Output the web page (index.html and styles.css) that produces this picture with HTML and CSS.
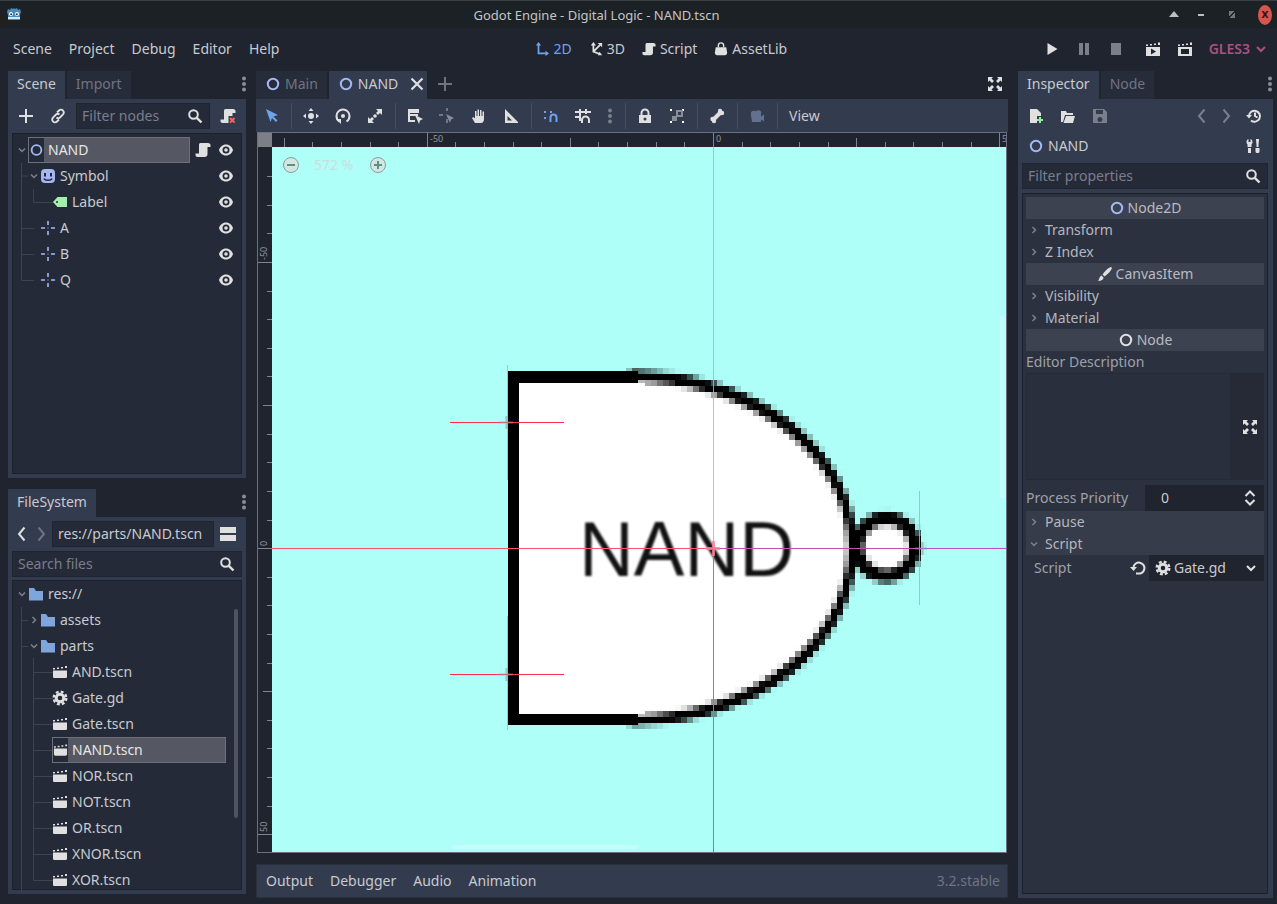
FILE: index.html

```html
<!DOCTYPE html>
<html lang="en">
<head>
<meta charset="UTF-8">
<title>Godot Engine - Digital Logic - NAND.tscn</title>
<link rel="stylesheet" href="styles.css">
</head>
<body>

<!-- icon sheet -->
<svg class="sheet" width="0" height="0">
  <symbol id="logo" viewBox="0 0 16 16"><path fill="#478cbf" d="M1 6l1-3 2 1 1-2 2 1 1-1 1 1 2-1 1 2 2-1 1 3-1 3v5H2V9z"/><circle cx="5" cy="8" r="2" fill="#fff"/><circle cx="11" cy="8" r="2" fill="#fff"/><circle cx="5.2" cy="8.2" r="1" fill="#333"/><circle cx="10.8" cy="8.2" r="1" fill="#333"/><path fill="#fff" d="M2 11h12v2H2z" opacity=".8"/></symbol>
  <symbol id="node" viewBox="0 0 16 16"><circle cx="8" cy="8" r="5.2" fill="none" stroke="currentColor" stroke-width="2"/></symbol>
  <symbol id="pos" viewBox="0 0 16 16"><path fill="none" stroke="#a5b7f3" stroke-width="1.6" d="M1 8h4M11 8h4M8 1v4M8 11v4"/><path fill="#a5b7f3" d="M7.5 7.5h1v1h-1z"/></symbol>
  <symbol id="sprite" viewBox="0 0 16 16"><rect x="1" y="1" width="14" height="14" rx="4" fill="#a5b7f3"/><rect x="4" y="5" width="2" height="3.5" fill="#252a39"/><rect x="10" y="5" width="2" height="3.5" fill="#252a39"/><path d="M4 10.5c1 2.3 7 2.3 8 0" fill="none" stroke="#252a39" stroke-width="1.5"/></symbol>
  <symbol id="label" viewBox="0 0 16 16"><path fill="#a5efac" d="M5.5 3H15v10H5.500L1 8z"/><circle cx="5" cy="8" r="1" fill="#252a39"/></symbol>
  <symbol id="eye" viewBox="0 0 16 16"><path fill="currentColor" fill-rule="evenodd" d="M8 2.5C4.500 2.500 1.800 5 1 8c.8 3 3.500 5.500 7 5.500s6.200-2.500 7-5.500c-.8-3-3.500-5.500-7-5.500zM8 4.500a3.500 3.500 0 1 1 0 7 3.500 3.500 0 0 1 0-7z"/><circle cx="8" cy="8" r="1.800" fill="currentColor"/></symbol>
  <symbol id="script" viewBox="0 0 16 16"><path fill="currentColor" d="M5.500 1H13c1.200 0 2.500.8 2.500 2v2H12.500v7c0 2-1 3-3 3H2.500C1.300 15 .5 14 .5 13v-1.500h3.500V3c0-1.200.5-2 1.500-2z"/></symbol>
  <symbol id="folder" viewBox="0 0 16 16"><path fill="#7ea6dc" d="M1 2h5l2 3h7v9.500H1z"/></symbol>
  <symbol id="clap" viewBox="0 0 16 16"><path fill="currentColor" d="M1 6.500h14v6c0 1-.7 1.500-1.500 1.500h-11C1.700 14 1 13.500 1 12.500z"/><path fill="currentColor" d="M1 4h2v1.500H1zM5 3.500h2V5H5zM9 3h2v1.500H9zM13 2h2v2h-2z"/></symbol>
  <symbol id="gear" viewBox="0 0 16 16"><circle cx="8" cy="8" r="3.800" fill="none" stroke="currentColor" stroke-width="3"/><circle cx="8" cy="8" r="6.300" fill="none" stroke="currentColor" stroke-width="2.400" stroke-dasharray="2.800 2.150"/></symbol>
  <symbol id="search" viewBox="0 0 16 16"><circle cx="6.500" cy="6.500" r="4.300" fill="none" stroke="currentColor" stroke-width="2"/><path d="M9.800 9.800L14.500 14.500" stroke="currentColor" stroke-width="2.400"/></symbol>
  <symbol id="down" viewBox="0 0 16 16"><path d="M4 6l4 4 4-4" fill="none" stroke="currentColor" stroke-width="2"/></symbol>
  <symbol id="right" viewBox="0 0 16 16"><path d="M6 4l4 4-4 4" fill="none" stroke="currentColor" stroke-width="2"/></symbol>
  <symbol id="back" viewBox="0 0 16 16"><path d="M10.500 1.500L5 8l5.500 6.500" fill="none" stroke="currentColor" stroke-width="2"/></symbol>
  <symbol id="fwd" viewBox="0 0 16 16"><path d="M5.500 1.500L11 8l-5.500 6.500" fill="none" stroke="currentColor" stroke-width="2"/></symbol>
  <symbol id="plus" viewBox="0 0 16 16"><path d="M8 1v14M1 8h14" stroke="currentColor" stroke-width="2"/></symbol>
  <symbol id="close" viewBox="0 0 16 16"><path d="M2.500 2.500l11 11M13.500 2.500l-11 11" stroke="currentColor" stroke-width="2.200"/></symbol>
  <symbol id="link" viewBox="0 0 16 16"><path fill="none" stroke="currentColor" stroke-width="1.800" d="M7 4.500l2-2c1.200-1.200 3-1.200 4 0s1 2.800 0 4l-3 3c-1.200 1-2.500 1-3.500 0M9 11.500l-2 2c-1.200 1.200-3 1.200-4 0s-1-2.800 0-4l3-3c1.200-1 2.500-1 3.500 0"/></symbol>
  <symbol id="script-x" viewBox="0 0 16 16"><path fill="currentColor" d="M5.500 1H13c1.200 0 2.500.8 2.500 2v2h-3v3H8.500v7H2.500C1.300 15 .5 14 .5 13v-1.500h3.500V3c0-1.200.5-2 1.500-2z"/><path d="M10 10l4.500 4.500M14.500 10L10 14.500" stroke="#ff5d5d" stroke-width="2"/></symbol>
  <symbol id="dots" viewBox="0 0 16 16"><circle cx="8" cy="2.500" r="2" fill="currentColor"/><circle cx="8" cy="8" r="2" fill="currentColor"/><circle cx="8" cy="13.500" r="2" fill="currentColor"/></symbol>
  <symbol id="select" viewBox="0 0 16 16"><path fill="currentColor" d="M2 1l12 6-4.500 1.500 4 4-1.500 1.500-4-4L6.500 14z"/></symbol>
  <symbol id="move" viewBox="0 0 16 16"><circle cx="8" cy="8" r="3" fill="currentColor"/><path fill="currentColor" d="M8 0l2.500 3h-5zM8 16l-2.500-3h5zM0 8l3-2.500v5zM16 8l-3 2.500v-5z"/></symbol>
  <symbol id="rotate" viewBox="0 0 16 16"><path fill="none" stroke="currentColor" stroke-width="2" d="M4.500 13.500C2.500 12.300 1.500 10.300 1.500 8a6.500 6.500 0 0 1 13 0c0 2.300-1 4.300-3 5.500"/><circle cx="8" cy="8" r="2" fill="currentColor"/><path fill="currentColor" d="M1 11h5v5z"/></symbol>
  <symbol id="scale" viewBox="0 0 16 16"><path fill="currentColor" d="M9 1h6v6l-2-2-2 2-2-2 2-2zM1 15V9l2 2 2-2 2 2-2 2 2 2z"/><circle cx="8" cy="8" r="1.800" fill="currentColor"/></symbol>
  <symbol id="listsel" viewBox="0 0 16 16"><path fill="currentColor" d="M1 1h11v4H3v1h8v2H3v4h5v2H1z"/><path fill="currentColor" d="M8 7l8 4-3 1.500-1 3.500z"/></symbol>
  <symbol id="pivot" viewBox="0 0 16 16"><path stroke="#888c96" stroke-width="1.500" d="M0 7h4M8 0v3M8 11v4"/><path fill="#888c96" d="M7 6l8 4-3 1.500-1 3.500z"/></symbol>
  <symbol id="hand" viewBox="0 0 16 16"><path fill="currentColor" d="M4 15l-3-5 1.300-1L4 10.500V3h1.500v5h1V1.500H8V8h1V2h1.500v6h1V3.500H13V11c0 2-1 4-3 4z"/></symbol>
  <symbol id="ruler" viewBox="0 0 16 16"><path fill="currentColor" fill-rule="evenodd" d="M2 1l13 13v1H2zM4.500 8v4.500H9z"/></symbol>
  <symbol id="snap" viewBox="0 0 16 16"><path fill="none" stroke="currentColor" stroke-width="2" d="M7.500 14V9.500a3 3 0 0 1 6 0V14"/><path fill="currentColor" d="M1 3h2v2H1zM1 9h2v2H1zM7 3h2v2H7z"/></symbol>
  <symbol id="snapgrid" viewBox="0 0 16 16"><path fill="none" stroke="currentColor" stroke-width="2" d="M7 15v-3a3.500 3.500 0 0 1 7 0v3M5 1v12M11 1v5M0 4h16M0 9h4"/></symbol>
  <symbol id="lock" viewBox="0 0 16 16"><path fill="currentColor" d="M2 7h12v8H2z"/><path fill="none" stroke="currentColor" stroke-width="2" d="M4.500 7V5a3.500 3.500 0 0 1 7 0v2"/><circle cx="8" cy="11" r="1.500" fill="#333b4f"/></symbol>
  <symbol id="group" viewBox="0 0 16 16"><path fill="#fff" d="M1 1h2v2H1zM13 13h2v2h-2zM1 13h2v2H1zM13 1h2v2h-2z"/><path fill="#8a8d95" d="M3 8h5v5H3z"/><path fill="none" stroke="#8a8d95" stroke-width="2" d="M8 8V3h5v5z"/></symbol>
  <symbol id="bone" viewBox="0 0 16 16"><path stroke="currentColor" stroke-width="4" d="M5 11l6-6"/><circle cx="3.500" cy="11" r="2.200" fill="currentColor"/><circle cx="5" cy="13" r="2.200" fill="currentColor"/><circle cx="11" cy="3" r="2.200" fill="currentColor"/><circle cx="13" cy="5" r="2.200" fill="currentColor"/></symbol>
  <symbol id="cam" viewBox="0 0 16 16"><circle cx="5" cy="6" r="3.200" fill="currentColor"/><circle cx="9.500" cy="5" r="2.800" fill="currentColor"/><path fill="currentColor" d="M2 7h10v7H3zM12 8.500l3-2v7l-3-2z"/></symbol>
  <symbol id="full" viewBox="0 0 16 16"><path fill="currentColor" d="M1 1h5L4.500 2.500 7 5 5 7 2.500 4.500 1 6zM15 1v5l-1.500-1.500L11 7 9 5l2.500-2.500L10 1zM1 15v-5l1.500 1.500L5 9l2 2-2.500 2.500L6 15zM15 15h-5l1.500-1.500L9 11l2-2 2.500 2.500L15 10z"/></symbol>
  <symbol id="mode2d" viewBox="0 0 16 16"><path fill="none" stroke="currentColor" stroke-width="2" d="M4 3v10h10"/><path fill="currentColor" d="M4 0l3 4H1zM16 13l-4 3v-6z"/></symbol>
  <symbol id="mode3d" viewBox="0 0 16 16"><path fill="none" stroke="currentColor" stroke-width="2" d="M5 3v8l8 3M5 11l8-8"/><path fill="currentColor" d="M5 0l3 4H2zM15 1v5l-5-5zM15 15l-5 0 2-4z"/></symbol>
  <symbol id="bag" viewBox="0 0 16 16"><path fill="currentColor" d="M2 6h12l1 6c0 2-1 3-2.500 3h-9C2 15 1 14 1 12z"/><path fill="none" stroke="currentColor" stroke-width="1.600" d="M5 6V4a3 3 0 0 1 6 0v2"/></symbol>
  <symbol id="play" viewBox="0 0 16 16"><path fill="currentColor" d="M3.500 2l10 6-10 6z"/></symbol>
  <symbol id="pause" viewBox="0 0 16 16"><path fill="currentColor" d="M3 2h4v12H3zM9 2h4v12H9z"/></symbol>
  <symbol id="stop" viewBox="0 0 16 16"><path fill="currentColor" d="M3 2h10v12H3z"/></symbol>
  <symbol id="playscene" viewBox="0 0 16 16"><path fill="currentColor" d="M1 6h14v9H1z"/><path fill="currentColor" d="M1 3.500h2V5H1zM5 3h2v1.500H5zM9 2.500h2V4H9zM13 1.500h2V4h-2z"/><path fill="#20242f" d="M6 7.500l5 3-5 3z"/></symbol>
  <symbol id="playcustom" viewBox="0 0 16 16"><path fill="currentColor" d="M1 6h14v9H1z"/><path fill="currentColor" d="M1 3.500h2V5H1zM5 3h2v1.500H5zM9 2.500h2V4H9zM13 1.500h2V4h-2z"/><path fill="#20242f" d="M4 8h8v5H4z"/></symbol>
  <symbol id="filenew" viewBox="0 0 16 16"><path fill="currentColor" d="M2 1h7l4 4v3H9v7H2z"/><path stroke="#8eef97" stroke-width="2" d="M12 9v6M9 12h6"/></symbol>
  <symbol id="open" viewBox="0 0 16 16"><path fill="currentColor" d="M1 3h5l1 2h6v2H5l-2 7H1z"/><path fill="currentColor" d="M6 8h9l-2 7H3.500z"/></symbol>
  <symbol id="save" viewBox="0 0 16 16"><path fill="currentColor" fill-rule="evenodd" d="M1 1h11l3 3v11H1zM4 2v4h7V2zM8 9a2.500 2.500 0 1 0 0 5 2.500 2.500 0 0 0 0-5z"/></symbol>
  <symbol id="history" viewBox="0 0 16 16"><path fill="none" stroke="currentColor" stroke-width="2" d="M3 8a5.500 5.500 0 1 1 2 4.500M9 4.500V8l2.500 1.500"/><path fill="currentColor" d="M0 7h6l-3 3.500z"/></symbol>
  <symbol id="tools" viewBox="0 0 16 16"><path fill="currentColor" d="M2.500 1v3h2V1C6 1.500 6.500 3 6.500 4S6 6 5.500 6.500V9h-4V6.500C1 6 .5 5 .5 4s.5-2.500 2-3zM2 10h3v5H2z"/><path fill="currentColor" d="M10 1h3v1l-.5 5v2h-2V7L10 2zM9.500 10h4v3.500c0 1-1 1.500-2 1.500s-2-.5-2-1.500z"/></symbol>
  <symbol id="brush" viewBox="0 0 16 16"><path fill="currentColor" d="M14 1l1 1c-1 3-4 6-7.500 8.500L5.500 8.500C8 5 11 2 14 1zM4.500 9.500l2 2c0 2-2 3.500-5.500 3.500 1.500-1 1-4.500 3.500-5.500z"/></symbol>
  <symbol id="revert" viewBox="0 0 16 16"><path fill="none" stroke="currentColor" stroke-width="2" d="M3.500 7A5.500 5.500 0 1 1 8 13.500H6"/><path fill="currentColor" d="M0 7h7L3.500 11z"/></symbol>
  <symbol id="updown" viewBox="0 0 16 16"><path d="M3.500 6L8 1.500 12.500 6M3.500 10L8 14.500 12.500 10" fill="none" stroke="currentColor" stroke-width="2"/></symbol>
  <symbol id="split" viewBox="0 0 16 16"><path fill="currentColor" d="M0 1h16v6H0zM0 9h16v6H0z"/></symbol>
</svg>

<header class="titlebar">
  <svg class="ic logo"><use href="#logo"/></svg>
  <span class="title">Godot Engine - Digital Logic - NAND.tscn</span>
  <div class="winbtns">
    <span class="wb-up"></span>
    <span class="wb-min"></span>
    <span class="wb-max"></span>
    <span class="wb-close">x</span>
  </div>
</header>

<nav class="menubar">
  <div class="menus">
    <span>Scene</span><span>Project</span><span>Debug</span><span>Editor</span><span>Help</span>
  </div>
  <div class="modes">
    <span class="mode on"><svg class="ic"><use href="#mode2d"/></svg>2D</span>
    <span class="mode"><svg class="ic"><use href="#mode3d"/></svg>3D</span>
    <span class="mode"><svg class="ic"><use href="#script"/></svg>Script</span>
    <span class="mode"><svg class="ic"><use href="#bag"/></svg>AssetLib</span>
  </div>
  <div class="runbtns">
    <span class="btn"><svg class="ic"><use href="#play"/></svg></span>
    <span class="btn off"><svg class="ic"><use href="#pause"/></svg></span>
    <span class="btn off"><svg class="ic"><use href="#stop"/></svg></span>
    <span class="btn first-scene"><svg class="ic"><use href="#playscene"/></svg></span>
    <span class="btn"><svg class="ic"><use href="#playcustom"/></svg></span>
    <span class="driver">GLES3</span>
    <svg class="ic driver-arrow"><use href="#down"/></svg>
  </div>
</nav>

<main class="editor">

  <!-- left docks -->
  <section class="col-left">
    <div class="dock scene-dock">
      <div class="tabs">
        <span class="tab active">Scene</span>
        <span class="tab">Import</span>
        <svg class="ic dots"><use href="#dots"/></svg>
      </div>
      <div class="panel">
        <div class="scene-tools">
          <svg class="ic tool-add"><use href="#plus"/></svg>
          <svg class="ic tool-link"><use href="#link"/></svg>
          <div class="field filter-nodes">Filter nodes<svg class="ic"><use href="#search"/></svg></div>
          <svg class="ic tool-x"><use href="#script-x"/></svg>
        </div>
        <div class="tree scene-tree">
          <svg class="guides" width="227" height="300"><g transform="translate(-13 -134)"><path d="M21.500 163V280.500M21.500 176H28M21.500 228.500H34M21.500 254.500H34M21.500 280.500H34M33.500 189V202.500H53"/></g></svg>
          <div class="row d0"><svg class="ic arrow"><use href="#down"/></svg>
            <div class="name sel w-scene"><svg class="ic node"><use href="#node"/></svg><span>NAND</span></div>
            <svg class="ic attached"><use href="#script"/></svg><svg class="ic eye"><use href="#eye"/></svg></div>
          <div class="row d1"><svg class="ic arrow"><use href="#down"/></svg>
            <div class="name"><svg class="ic"><use href="#sprite"/></svg><span>Symbol</span></div>
            <svg class="ic eye"><use href="#eye"/></svg></div>
          <div class="row d2"><span class="arrow"></span>
            <div class="name"><svg class="ic"><use href="#label"/></svg><span>Label</span></div>
            <svg class="ic eye"><use href="#eye"/></svg></div>
          <div class="row d1"><span class="arrow"></span>
            <div class="name"><svg class="ic"><use href="#pos"/></svg><span>A</span></div>
            <svg class="ic eye"><use href="#eye"/></svg></div>
          <div class="row d1"><span class="arrow"></span>
            <div class="name"><svg class="ic"><use href="#pos"/></svg><span>B</span></div>
            <svg class="ic eye"><use href="#eye"/></svg></div>
          <div class="row d1"><span class="arrow"></span>
            <div class="name"><svg class="ic"><use href="#pos"/></svg><span>Q</span></div>
            <svg class="ic eye"><use href="#eye"/></svg></div>
        </div>
      </div>
    </div>

    <div class="dock fs-dock">
      <div class="tabs">
        <span class="tab active">FileSystem</span>
        <svg class="ic dots"><use href="#dots"/></svg>
      </div>
      <div class="panel">
        <div class="fs-path">
          <svg class="ic nav"><use href="#back"/></svg>
          <svg class="ic nav dim"><use href="#fwd"/></svg>
          <div class="field path">res://parts/NAND.tscn</div>
          <svg class="ic split"><use href="#split"/></svg>
        </div>
        <div class="field fs-search">Search files<svg class="ic"><use href="#search"/></svg></div>
        <div class="tree fs-tree">
          <svg class="guides" width="227" height="312"><g transform="translate(-13 -581)"><path d="M21.500 607V893M21.500 620.500H28M21.500 646.500H28M33.500 658V880.500M33.500 672.500H53M33.500 698.500H53M33.500 724.500H53M33.500 750.500H53M33.500 776.500H53M33.500 802.500H53M33.500 828.500H53M33.500 854.500H53M33.500 880.500H53"/></g></svg>
          <div class="row d0"><svg class="ic arrow"><use href="#down"/></svg><div class="name"><svg class="ic"><use href="#folder"/></svg><span>res://</span></div></div>
          <div class="row d1"><svg class="ic arrow"><use href="#right"/></svg><div class="name"><svg class="ic"><use href="#folder"/></svg><span>assets</span></div></div>
          <div class="row d1"><svg class="ic arrow"><use href="#down"/></svg><div class="name"><svg class="ic"><use href="#folder"/></svg><span>parts</span></div></div>
          <div class="row d2"><span class="arrow"></span><div class="name"><svg class="ic"><use href="#clap"/></svg><span>AND.tscn</span></div></div>
          <div class="row d2"><span class="arrow"></span><div class="name"><svg class="ic"><use href="#gear"/></svg><span>Gate.gd</span></div></div>
          <div class="row d2"><span class="arrow"></span><div class="name"><svg class="ic"><use href="#clap"/></svg><span>Gate.tscn</span></div></div>
          <div class="row d2"><span class="arrow"></span><div class="name sel w-fs"><svg class="ic"><use href="#clap"/></svg><span>NAND.tscn</span></div></div>
          <div class="row d2"><span class="arrow"></span><div class="name"><svg class="ic"><use href="#clap"/></svg><span>NOR.tscn</span></div></div>
          <div class="row d2"><span class="arrow"></span><div class="name"><svg class="ic"><use href="#clap"/></svg><span>NOT.tscn</span></div></div>
          <div class="row d2"><span class="arrow"></span><div class="name"><svg class="ic"><use href="#clap"/></svg><span>OR.tscn</span></div></div>
          <div class="row d2"><span class="arrow"></span><div class="name"><svg class="ic"><use href="#clap"/></svg><span>XNOR.tscn</span></div></div>
          <div class="row d2"><span class="arrow"></span><div class="name"><svg class="ic"><use href="#clap"/></svg><span>XOR.tscn</span></div></div>
          <div class="fs-scroll"></div>
        </div>
      </div>
    </div>
  </section>

  <!-- viewport column -->
  <section class="col-center">
    <div class="tabs scene-tabs">
      <span class="tab"><svg class="ic node"><use href="#node"/></svg>Main</span>
      <span class="tab active"><svg class="ic node"><use href="#node"/></svg>NAND<svg class="ic tab-x"><use href="#close"/></svg></span>
      <svg class="ic tab-add"><use href="#plus"/></svg>
      <svg class="ic tab-full"><use href="#full"/></svg>
    </div>
    <div class="view-panel">
      <div class="toolbar">
        <span class="btn b-first blue"><svg class="ic"><use href="#select"/></svg></span>
        <i class="sep"></i>
        <span class="btn"><svg class="ic"><use href="#move"/></svg></span>
        <span class="btn"><svg class="ic"><use href="#rotate"/></svg></span>
        <span class="btn"><svg class="ic"><use href="#scale"/></svg></span>
        <i class="sep"></i>
        <span class="btn"><svg class="ic"><use href="#listsel"/></svg></span>
        <span class="btn"><svg class="ic"><use href="#pivot"/></svg></span>
        <span class="btn"><svg class="ic"><use href="#hand"/></svg></span>
        <span class="btn"><svg class="ic"><use href="#ruler"/></svg></span>
        <i class="sep"></i>
        <span class="btn blue"><svg class="ic"><use href="#snap"/></svg></span>
        <span class="btn"><svg class="ic"><use href="#snapgrid"/></svg></span>
        <span class="btn narrow off"><svg class="ic"><use href="#dots"/></svg></span>
        <i class="sep"></i>
        <span class="btn"><svg class="ic"><use href="#lock"/></svg></span>
        <span class="btn"><svg class="ic"><use href="#group"/></svg></span>
        <i class="sep"></i>
        <span class="btn"><svg class="ic"><use href="#bone"/></svg></span>
        <i class="sep"></i>
        <span class="btn cam"><svg class="ic"><use href="#cam"/></svg></span>
        <i class="sep"></i>
        <span class="view-menu">View</span>
      </div>
      <div class="viewport">
        <svg class="canvas" width="748" height="719" viewBox="258 133 748 719">
          <defs>
            <filter id="pixelate" filterUnits="userSpaceOnUse" x="500" y="362" width="440" height="372">
              <feGaussianBlur in="SourceGraphic" stdDeviation="1.800" result="soft"/>
              <feFlood x="503" y="365" width="1" height="1"/>
              <feComposite x="500" y="362" width="6" height="6"/>
              <feTile result="dots"/>
              <feComposite in="soft" in2="dots" operator="in"/>
              <feMorphology operator="dilate" radius="3"/>
            </filter>
          </defs>

          <rect x="272" y="147" width="734" height="705" fill="#aefff8"/>

          <!-- rulers -->
          <rect x="258" y="133" width="14" height="14" fill="#7c7f86"/>
          <path class="tick" d="M284.500 138V147M570.500 138V147M856.500 138V147M312.500 142V147M341.500 142V147M370.500 142V147M398.500 142V147M455.500 142V147M484.500 142V147M513.500 142V147M541.500 142V147M598.500 142V147M627.500 142V147M656.500 142V147M684.500 142V147M742.500 142V147M770.500 142V147M799.500 142V147M828.500 142V147M885.500 142V147M913.500 142V147M942.500 142V147M971.500 142V147"/>
          <path class="tick" d="M427.500 133V147M713.500 133V147M999.500 133V147"/>
          <path class="tick" d="M263 405.500H272M263 691.500H272M267 176.500H272M267 205.500H272M267 233.500H272M267 291.500H272M267 319.500H272M267 348.500H272M267 376.500H272M267 434.500H272M267 462.500H272M267 491.500H272M267 520.500H272M267 577.500H272M267 605.500H272M267 634.500H272M267 663.500H272M267 720.500H272M267 748.500H272M267 777.500H272M267 806.500H272"/>
          <path class="tick" d="M258 262.500H272M258 548.500H272M258 834.500H272"/>
          <text class="ruler-txt" x="430" y="142">-50</text>
          <text class="ruler-txt" x="716" y="142">0</text>
          <text class="ruler-txt" x="1002" y="142">5</text>
          <text class="ruler-txt" transform="translate(267 260) rotate(-90)">-50</text>
          <text class="ruler-txt" transform="translate(267 546) rotate(-90)">0</text>
          <text class="ruler-txt" transform="translate(267 832) rotate(-90)">50</text>

          <!-- gate sprite -->
          <g filter="url(#pixelate)">
            <path fill="#000" d="M630 371C760 371 856 450 856 548S760 725 630 725z"/>
            <path fill="#fff" d="M630 383C750 383 846 458 846 548S750 714 630 714z"/>
            <circle cx="886" cy="547" r="35" fill="#000"/>
            <circle cx="886" cy="547" r="21" fill="#fff"/>
          </g>
          <rect x="508" y="371" width="130" height="354" fill="#000"/>
          <rect x="519" y="383" width="126" height="331" fill="#fff"/>
          <text class="gate-txt" x="579" y="576" textLength="215" lengthAdjust="spacingAndGlyphs">NAND</text>

          <!-- node gizmos -->
          <path class="g-line" d="M507.500 365V480M507.500 616V730M919.500 491V605M713.500 147V548"/>
          <path class="g-line2" d="M713.500 548V852"/>
          <path class="r-line" d="M450 422.500H564M450 674.500H564"/>
          <path class="r-line2" d="M272 548.500H713"/>
          <path class="p-line" d="M713 548.500H1006"/>
          <path class="cross" d="M499 422.500H513M506.500 416V429M499 674.500H513M506.500 668V681M915 548.500H927M922.500 542V555"/>
          <path class="cross-o" d="M706 548.500H720M713.500 541V556"/>

          <!-- zoom widget -->
          <circle class="zoom-btn" cx="291" cy="165" r="7.500"/>
          <path class="zoom-sign" d="M287 165H295"/>
          <text class="zoom-txt" x="314" y="170">572 %</text>
          <circle class="zoom-btn" cx="378" cy="165" r="7.500"/>
          <path class="zoom-sign" d="M374 165H382M378 161V169"/>

          <!-- scrollbars -->
          <rect class="scroll" x="1000" y="316" width="5" height="182"/>
          <rect class="scroll" x="452" y="845" width="186" height="4"/>
        </svg>
      </div>
    </div>
    <div class="bottom-bar">
      <span>Output</span><span>Debugger</span><span>Audio</span><span>Animation</span>
      <span class="version">3.2.stable</span>
    </div>
  </section>

  <!-- inspector -->
  <section class="col-right">
    <div class="tabs">
      <span class="tab active">Inspector</span>
      <span class="tab">Node</span>
      <svg class="ic dots"><use href="#dots"/></svg>
    </div>
    <div class="panel">
      <div class="insp-tools">
        <svg class="ic"><use href="#filenew"/></svg>
        <svg class="ic"><use href="#open"/></svg>
        <svg class="ic off"><use href="#save"/></svg>
        <svg class="ic off hist-back"><use href="#back"/></svg>
        <svg class="ic off"><use href="#fwd"/></svg>
        <svg class="ic hist"><use href="#history"/></svg>
      </div>
      <div class="insp-obj">
        <svg class="ic node"><use href="#node"/></svg><span>NAND</span>
        <svg class="ic obj-tools"><use href="#tools"/></svg>
      </div>
      <div class="field insp-filter">Filter properties<svg class="ic"><use href="#search"/></svg></div>
      <div class="tree insp-tree">
        <div class="cat"><svg class="ic node"><use href="#node"/></svg>Node2D</div>
        <div class="sect"><svg class="ic"><use href="#right"/></svg>Transform</div>
        <div class="sect"><svg class="ic"><use href="#right"/></svg>Z Index</div>
        <div class="cat"><svg class="ic"><use href="#brush"/></svg>CanvasItem</div>
        <div class="sect"><svg class="ic"><use href="#right"/></svg>Visibility</div>
        <div class="sect"><svg class="ic"><use href="#right"/></svg>Material</div>
        <div class="cat"><svg class="ic white"><use href="#node"/></svg>Node</div>
        <div class="prop-label">Editor Description</div>
        <div class="textarea"><div class="ta-body"></div><div class="ta-side"><svg class="ic"><use href="#full"/></svg></div></div>
        <div class="prop-line">
          <span class="prop-name">Process Priority</span>
          <div class="spin">0<svg class="ic"><use href="#updown"/></svg></div>
        </div>
        <div class="sect lit"><svg class="ic"><use href="#right"/></svg>Pause</div>
        <div class="sect lit"><svg class="ic"><use href="#down"/></svg>Script</div>
        <div class="prop-line script-line">
          <span class="prop-name">Script</span>
          <svg class="ic revert"><use href="#revert"/></svg>
          <div class="res-btn"><svg class="ic"><use href="#gear"/></svg>Gate.gd<svg class="ic res-arrow"><use href="#down"/></svg></div>
        </div>
      </div>
    </div>
  </section>
</main>

</body>
</html>
```

FILE: styles.css

```css
* {
  box-sizing: border-box;
}
html, body {
  height: 100%;
}
body {
  margin: 0;
  width: 1277px;
  height: 904px;
  overflow: hidden;
  background: #20242f;
  color: #c8cad0;
  font-family: "Noto Sans", sans-serif;
  font-size: 14px;
  line-height: 20px;
  display: flex;
  flex-direction: column;
}
.sheet {
  position: absolute;
}
.ic {
  width: 16px;
  height: 16px;
  flex: none;
  color: #e0e0e0;
}
.ic.node {
  color: #a5b7f3;
}
.ic.off, .btn.off .ic {
  color: #7b7f8a;
}

/* window title */
.titlebar {
  height: 28px;
  flex: none;
  background: #1b2125;
  border-top: 1px solid #3a4042;
  display: flex;
  align-items: center;
  justify-content: center;
  position: relative;
  color: #c3c5c6;
  font-size: 13px;
  padding-right: 84px;
}
.logo {
  position: absolute;
  left: 6px;
  top: 5px;
}
.winbtns {
  position: absolute;
  right: 0;
  top: 0;
  width: 110px;
  height: 28px;
}
.wb-up, .wb-min, .wb-max, .wb-close {
  position: absolute;
}
.wb-up {
  left: 2px;
  top: 10px;
  width: 0;
  height: 0;
  border: 5px solid transparent;
  border-top: 0;
  border-bottom: 6px solid #bcbebf;
}
.wb-min {
  left: 31px;
  top: 13px;
  width: 6px;
  height: 2px;
  background: #bcbebf;
}
.wb-max {
  left: 62px;
  top: 10px;
  width: 6px;
  height: 7px;
  background: linear-gradient(135deg, #777 45%, transparent 45%, transparent 55%, #777 55%);
}
.wb-close {
  left: 91px;
  top: 4px;
  width: 14px;
  height: 20px;
  border-radius: 50%;
  background: #d9534f;
  color: #3b1514;
  font-size: 12px;
  font-weight: 700;
  line-height: 18px;
  text-align: center;
}

/* main menu */
.menubar {
  height: 42px;
  flex: none;
  display: flex;
  align-items: center;
  padding: 0 8px 0 13px;
}
.menus {
  display: flex;
  gap: 17px;
}
.modes {
  display: flex;
  gap: 17px;
  margin-left: 256px;
}
.mode {
  display: flex;
  align-items: center;
  gap: 4px;
}
.mode .ic {
  width: 14px;
  height: 14px;
}
.mode.on, .mode.on .ic {
  color: #6ea3ec;
}
.runbtns {
  display: flex;
  align-items: center;
  margin-left: auto;
}
.btn {
  width: 32px;
  height: 24px;
  flex: none;
  display: flex;
  align-items: center;
  justify-content: center;
}
.first-scene {
  margin-left: 5px;
}
.driver {
  margin-left: 8px;
  color: #a8527f;
  font-weight: 600;
}
.driver-arrow {
  margin-left: 3px;
  color: #a8527f;
}

/* three columns */
.editor {
  flex: 1;
  min-height: 0;
  padding: 1px 4px 6px 8px;
  display: grid;
  grid-template-columns: 238px 752px 255px;
  column-gap: 10px;
}
.col-left, .col-center, .col-right {
  display: flex;
  flex-direction: column;
  min-height: 0;
}
.col-left {
  padding-bottom: 4px;
  gap: 11px;
}
.dock {
  display: flex;
  flex-direction: column;
}
.scene-dock {
  height: 407px;
  flex: none;
}
.fs-dock {
  flex: 1;
  min-height: 0;
}
.tabs {
  height: 28px;
  flex: none;
  display: flex;
  gap: 2px;
  position: relative;
}
.tab {
  height: 28px;
  padding: 0 9px 2px;
  display: flex;
  align-items: center;
  background: #272c3a;
  color: #6f7482;
}
.tab.active {
  background: #333b4f;
  color: #c8cad0;
}
.dots {
  position: absolute;
  right: -6px;
  top: 5px;
  color: #8b8e97;
}
.panel {
  flex: 1;
  min-height: 0;
  background: #333b4f;
  padding: 0 4px 4px;
  display: flex;
  flex-direction: column;
}
.field {
  height: 26px;
  background: #252a39;
  border: 1px solid #20242f;
  display: flex;
  align-items: center;
  padding-left: 5px;
  color: #7a7e8b;
}
.field .ic {
  margin-left: auto;
  margin-right: 6px;
}

/* scene dock */
.scene-tools {
  height: 34px;
  flex: none;
  display: flex;
  align-items: center;
}
.tool-add {
  margin-left: 6px;
}
.tool-link {
  margin-left: 16px;
}
.filter-nodes {
  width: 134px;
  margin-left: 10px;
}
.tool-x {
  margin-left: 10px;
}
.tree {
  flex: 1;
  min-height: 0;
  background: #252a39;
  border: 1px solid #1c202a;
  position: relative;
}
.scene-tree {
  padding-top: 3px;
}
.guides {
  position: absolute;
  left: 0;
  top: 0;
  fill: none;
  stroke: #3d4354;
  stroke-width: 1;
}
.row {
  height: 26px;
  display: flex;
  align-items: center;
  position: relative;
  padding-right: 7px;
}
.d0 {
  padding-left: 3px;
}
.d1 {
  padding-left: 15px;
}
.d2 {
  padding-left: 27px;
}
.arrow {
  width: 12px;
  height: 16px;
  flex: none;
  color: #7d818c;
}
.name {
  display: flex;
  align-items: center;
  gap: 4px;
  height: 26px;
}
.name.sel {
  background: #555863;
  border: 1px solid #6d707a;
  color: #e6e6e8;
}
.name.sel .ic {
  height: 24px;
  background: #252a39;
  padding: 4px 0;
  width: 15px;
}
.w-scene {
  width: 162px;
}
.w-fs {
  width: 174px;
}
.attached {
  margin-left: 5px;
}
.eye {
  margin-left: auto;
}

/* filesystem dock */
.fs-path {
  height: 34px;
  flex: none;
  display: flex;
  align-items: center;
}
.nav {
  margin-left: 2px;
  width: 16px;
}
.nav + .nav {
  margin-left: 3px;
}
.nav.dim {
  color: #6f7482;
}
.path {
  width: 162px;
  margin-left: 3px;
  color: #c8cad0;
}
.split {
  margin-left: 6px;
}
.fs-search {
  flex: none;
  margin-bottom: 3px;
}
.fs-scroll {
  position: absolute;
  left: 221px;
  top: 28px;
  width: 4px;
  height: 209px;
  border-radius: 2px;
  background: #4f5463;
}

/* viewport */
.scene-tabs .tab {
  gap: 4px;
}
.tab-x {
  margin-left: 7px;
  margin-right: -7px;
}
.tab-add {
  margin: 5px 0 0 8px;
  color: #6f7482;
}
.tab-full {
  position: absolute;
  right: 5px;
  top: 5px;
}
.view-panel {
  height: 754px;
  flex: none;
  display: flex;
  flex-direction: column;
  border-bottom: 1px solid #1c202a;
}
.toolbar {
  height: 33px;
  flex: none;
  background: #333b4f;
  display: flex;
  align-items: center;
}
.b-first {
  width: 31px;
}
.blue .ic {
  color: #6ea3ec;
}
.sep {
  width: 1px;
  height: 26px;
  margin: 0 3px 0 4px;
  background: #474e60;
  flex: none;
}
.narrow {
  width: 22px;
}
.cam .ic {
  color: #64708f;
}
.view-menu {
  margin-left: 8px;
}
.viewport {
  margin: 0 1px;
  height: 721px;
  border: 1px solid #6b7080;
  background: #20242f;
}
.canvas {
  display: block;
}
.tick {
  stroke: #81848c;
  stroke-width: 1;
}
.ruler-txt {
  fill: #9094a0;
  font-size: 9px;
  font-family: "Noto Sans", sans-serif;
}
.gate-txt {
  font-family: "Liberation Sans", sans-serif;
  font-size: 77px;
  fill: #111;
  filter: blur(1.2px);
}
.g-line {
  stroke: #96d83c;
  stroke-width: 1;
  fill: none;
  opacity: .85;
}
.g-line2 {
  stroke: #5f9d88;
  stroke-width: 1;
}
.r-line {
  stroke: #ff2e52;
  stroke-width: 1;
}
.r-line2 {
  stroke: #ff4f72;
  stroke-width: 1;
}
.p-line {
  stroke: #c24fb4;
  stroke-width: 1;
}
.cross {
  stroke: #8a9aa2;
  stroke-width: 2;
  opacity: .6;
  fill: none;
}
.cross-o {
  stroke: #ff7f96;
  stroke-width: 3;
  opacity: .8;
  fill: none;
}
.zoom-btn {
  fill: #d4e6e2;
  stroke: #8a9e9c;
  stroke-width: 1;
}
.zoom-sign {
  stroke: #5f9086;
  stroke-width: 2;
  fill: none;
}
.zoom-txt {
  font-size: 14px;
  font-family: "Noto Sans", sans-serif;
  fill: #cddddd;
}
.scroll {
  fill: #fff;
  opacity: .25;
}
.bottom-bar {
  height: 34px;
  margin-top: 11px;
  flex: none;
  background: #333b4f;
  border: 1px solid #2a2f3e;
  display: flex;
  align-items: center;
  gap: 17px;
  padding: 0 7px 0 9px;
}
.version {
  margin-left: auto;
  color: #6f7482;
}

/* inspector */
.col-right .panel {
  padding-right: 5px;
}
.col-right .dots {
  right: -5px;
}
.insp-tools {
  height: 34px;
  flex: none;
  display: flex;
  align-items: center;
  gap: 16px;
  padding-left: 6px;
}
.insp-tools .hist-back {
  margin-left: 70px;
  margin-right: -8px;
}
.insp-tools .hist {
  margin-left: -4px;
}
.insp-obj {
  height: 26px;
  flex: none;
  display: flex;
  align-items: center;
  gap: 4px;
  padding-left: 6px;
}
.obj-tools {
  margin-left: auto;
  margin-right: 6px;
}
.insp-filter {
  flex: none;
  margin-top: 4px;
  margin-bottom: 4px;
}
.insp-tree {
  background: #2c3140;
  padding: 3px 3px 0;
}
.cat {
  height: 22px;
  background: #3d4250;
  display: flex;
  align-items: center;
  justify-content: center;
  gap: 3px;
  color: #b9bbc2;
}
.ic.white {
  color: #e0e0e0;
}
.sect {
  height: 22px;
  display: flex;
  align-items: center;
  color: #b5b7be;
}
.sect .ic {
  width: 16px;
  color: #7d818c;
  transform: scale(.75);
  margin-right: 3px;
}
.sect.lit {
  background: #373c4a;
}
.prop-label {
  height: 22px;
  color: #9ea1aa;
  display: flex;
  align-items: center;
}
.textarea {
  height: 107px;
  display: flex;
}
.ta-body {
  flex: 1;
  background: #2a2f3e;
  border: 1px solid #262a38;
}
.ta-side {
  width: 33px;
  background: #252a36;
  display: flex;
  align-items: center;
  justify-content: center;
  padding-left: 4px;
}
.prop-line {
  height: 26px;
  margin-top: 5px;
  display: flex;
  align-items: center;
}
.prop-name {
  color: #9ea1aa;
}
.spin {
  margin-left: auto;
  width: 119px;
  height: 26px;
  background: #20242f;
  display: flex;
  align-items: center;
  padding-left: 16px;
}
.spin .ic {
  margin-left: auto;
  margin-right: 6px;
}
.script-line {
  margin-top: 0;
  padding-left: 8px;
}
.revert {
  margin-left: 59px;
}
.res-btn {
  margin-left: auto;
  width: 115px;
  flex: none;
  height: 26px;
  background: #20242f;
  display: flex;
  align-items: center;
  gap: 3px;
  padding-left: 6px;
}
.res-arrow {
  margin-left: auto;
  margin-right: 5px;
}
```
